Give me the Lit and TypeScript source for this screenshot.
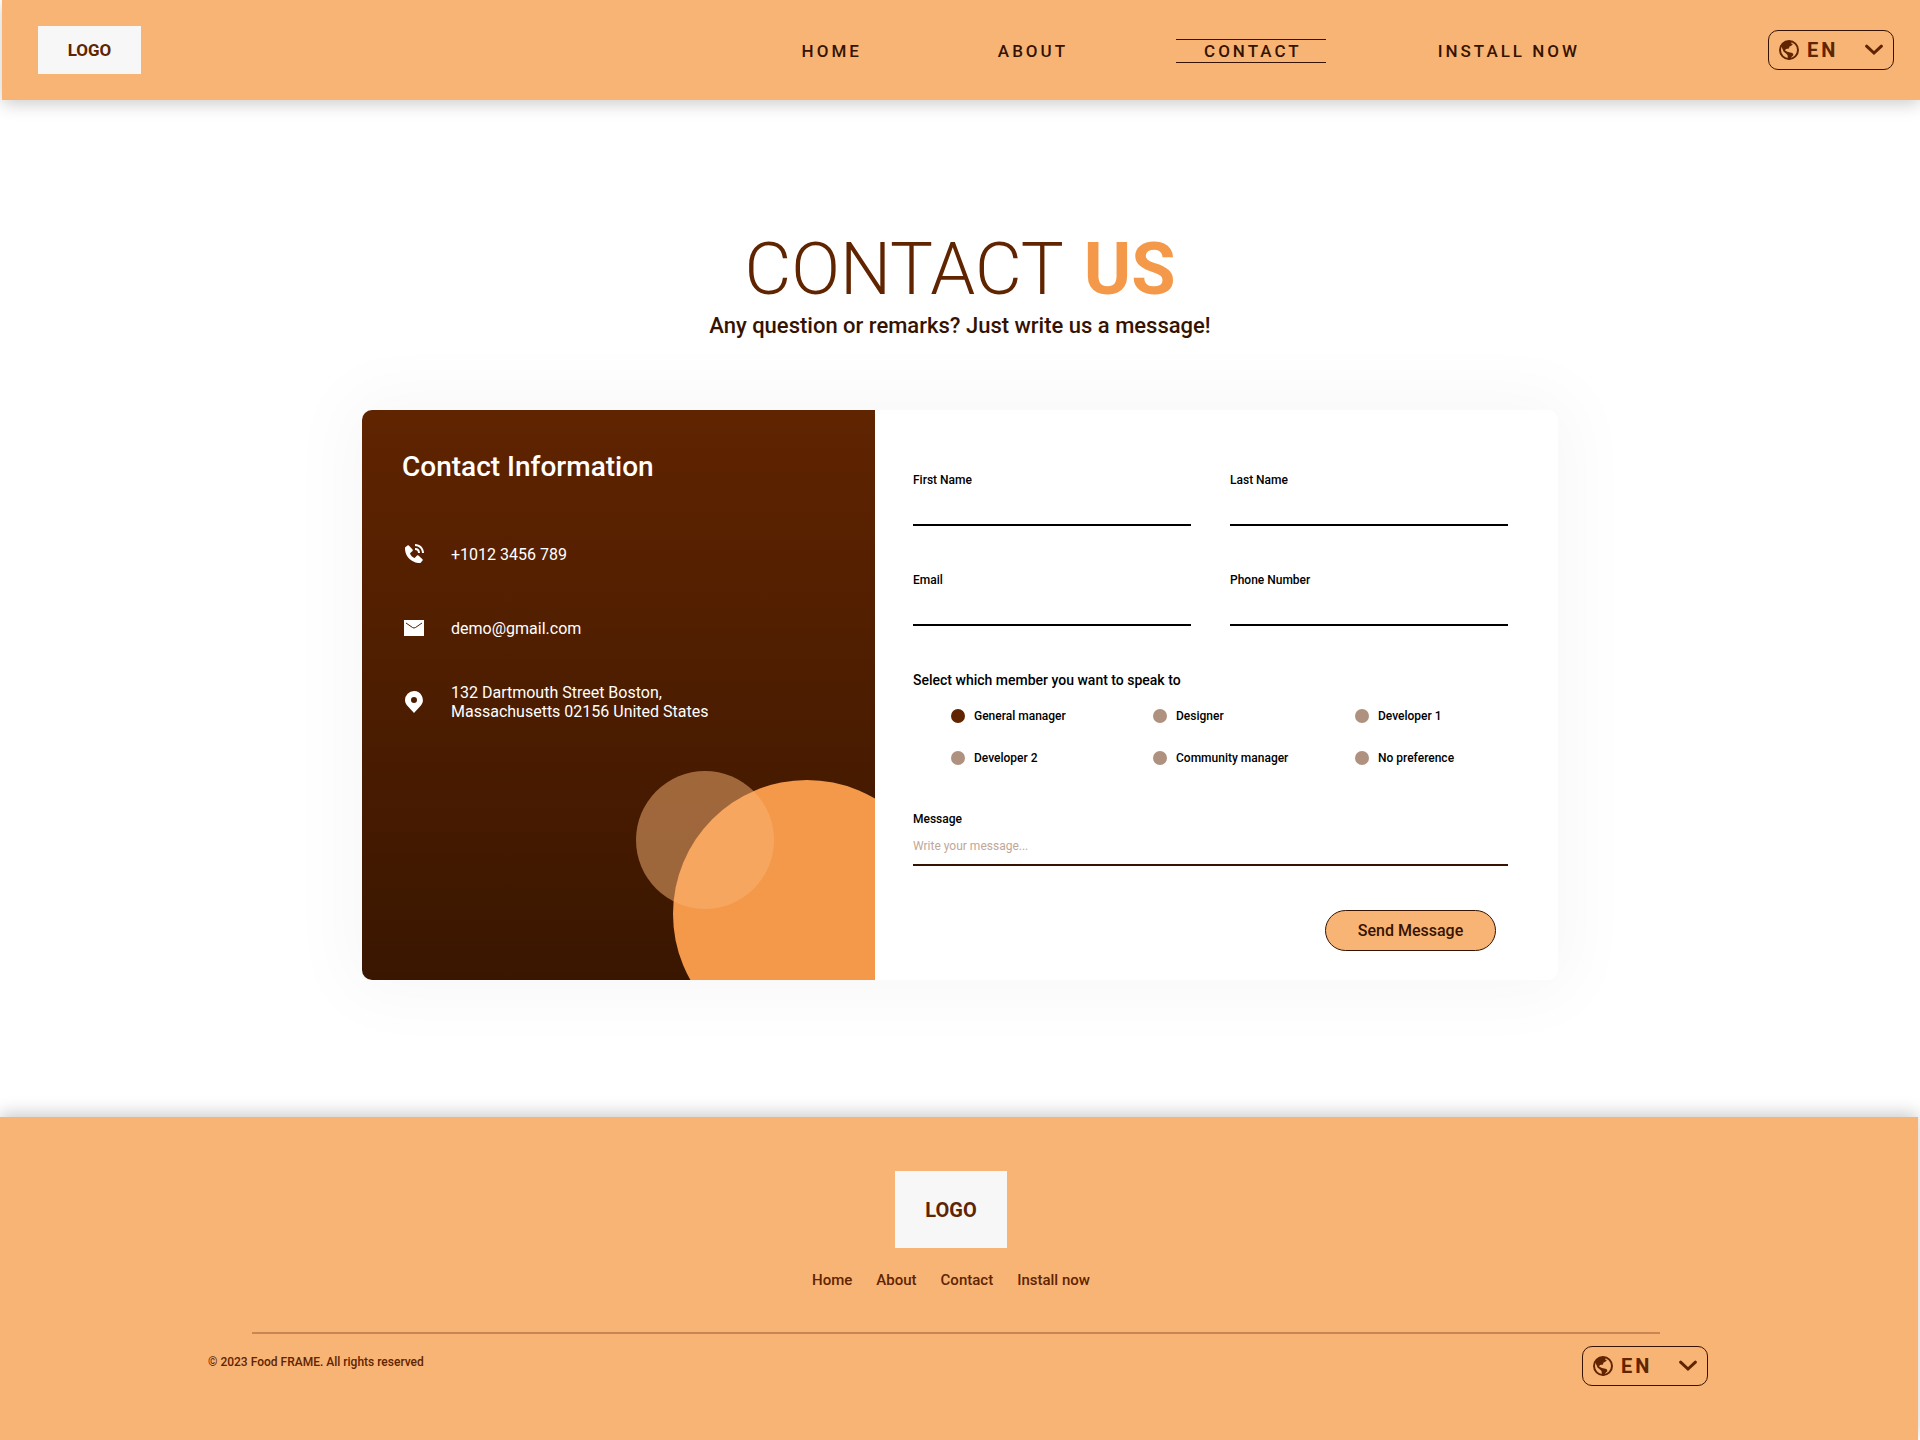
import { LitElement, html, css, svg } from "lit";
import { customElement, property, state } from "lit/decorators.js";

@customElement("language-select")
class LanguageSelect extends LitElement {
  @property() label = "Language";

  static styles = css`
    :host {
      display: block;
      font-family: Roboto, "Liberation Sans", sans-serif;
    }
    .box {
      display: grid;
      grid-template-columns: 20px 1fr 18px;
      align-items: center;
      width: 126px;
      height: 40px;
      padding: 0 10px;
      box-sizing: border-box;
      border: 1px solid #361300;
      border-radius: 10px;
      color: #602400;
    }
    .globe,
    .chevron,
    .select {
      grid-row: 1;
    }
    .globe {
      grid-column: 1;
      width: 20px;
      height: 20px;
    }
    .chevron {
      grid-column: 3;
      width: 18px;
      height: 12px;
    }
    .select {
      grid-column: 1 / 4;
      appearance: none;
      width: 100%;
      height: 38px;
      margin: 0;
      padding: 0 0 0 28px;
      border: 0;
      background: transparent;
      color: inherit;
      font: 700 20px/24px Roboto, "Liberation Sans", sans-serif;
      letter-spacing: 3px;
    }
  `;

  render() {
    return html`
      <div class="box">
        <svg class="globe" viewBox="0 0 20 20" aria-hidden="true">
          <circle cx="10" cy="10" r="9" fill="none" stroke="currentColor" stroke-width="2" />
          <path
            fill="currentColor"
            d="M2 6 5 2.500 9 1 13 1.500 12 3.500 14 4 12 6 10.500 6.500 10 8.500 7 9 6 10.500 9 12 13.500 13 14.500 15 12.500 17 11 20 9 19 8.500 15 7 13.500 4.500 11.500 3.500 9Z"
          />
        </svg>
        <svg class="chevron" viewBox="0 0 18 12" aria-hidden="true">
          <path
            fill="none"
            stroke="currentColor"
            stroke-width="3"
            stroke-linecap="round"
            d="M1.600 2.200 9 9 16.400 2.200"
          />
        </svg>
        <select class="select" aria-label=${this.label}>
          <option>EN</option>
        </select>
      </div>
    `;
  }
}

const phoneIcon = svg`<path fill="currentColor" d="M20 10.999h2C22 5.869 18.127 2 12.990 2v2C17.052 4 20 6.943 20 10.999z M13 8c2.103 0 3 .897 3 3h2c0-3.225-1.775-5-5-5v2z M16.422 13.443a1.001 1.001 0 0 0-1.391.043l-2.393 2.461c-.576-.110-1.734-.471-2.926-1.660-1.192-1.193-1.553-2.354-1.660-2.926l2.459-2.394a1 1 0 0 0 .043-1.391L6.859 3.513a1 1 0 0 0-1.391-.087l-2.170 1.861a1 1 0 0 0-.290.649c-.015.250-.301 6.172 4.291 10.766C11.305 20.707 16.323 21 17.705 21c.202 0 .326-.006.359-.008a.992.992 0 0 0 .648-.291l1.860-2.171a1 1 0 0 0-.086-1.391l-4.064-3.696z"/>`;
const mailIcon = svg`<path fill="currentColor" d="M2 4h20v16H2z"/><path fill="none" stroke="#501d00" d="M4 7 10.500 11.500q1.500 1 3 0L20 7"/>`;
const pinIcon = svg`<path fill="currentColor" fill-rule="evenodd" d="M12 1a9 9 0 0 0-9 9c0 2 .7 3.800 1.900 5.300L12 23l7.100-7.700A9 9 0 0 0 12 1zm0 6a3 3 0 1 1 0 6 3 3 0 0 1 0-6z"/>`;

const links = ["Home", "About", "Contact", "Install now"];
const members = ["General manager", "Designer", "Developer 1", "Developer 2", "Community manager", "No preference"];
const details = [
  { icon: phoneIcon, lines: ["+1012 3456 789"] },
  { icon: mailIcon, lines: ["demo@gmail.com"] },
  { icon: pinIcon, lines: ["132 Dartmouth Street Boston,", "Massachusetts 02156 United States"] },
];
const fields = [
  { id: "first", label: "First Name", type: "text" },
  { id: "last", label: "Last Name", type: "text" },
  { id: "email", label: "Email", type: "email" },
  { id: "phone", label: "Phone Number", type: "tel" },
];

@customElement("app-root")
class AppRoot extends LitElement {
  @state() private member = members[0];

  static styles = css`
    :host {
      display: flex;
      flex-direction: column;
      min-height: 100vh;
      background: #fff;
      color: #361300;
      font-family: Roboto, "Liberation Sans", sans-serif;
    }
    a {
      color: inherit;
      text-decoration: none;
    }
    .header {
      display: flex;
      align-items: center;
      height: 100px;
      margin-left: 2px;
      padding: 0 26px 0 36px;
      box-sizing: border-box;
      background: #f8b475;
      box-shadow: 0 4px 16px rgba(0, 0, 0, 0.2);
    }
    .logo {
      display: grid;
      place-items: center;
      background: #f7f7f7;
      color: #602400;
      font-weight: 700;
    }
    .logo-top {
      width: 103px;
      height: 48px;
      font-size: 17px;
    }
    .nav {
      display: flex;
      gap: 84px;
      margin: 2px 164px 0 auto;
    }
    .nav-link {
      padding: 2px 24px 2px 28px;
      border: solid transparent;
      border-width: 1px 0;
      font-size: 17px;
      font-weight: 500;
      line-height: 18px;
      letter-spacing: 3px;
      text-transform: uppercase;
    }
    .current {
      border-color: #361300;
    }
    .main {
      padding: 134px 24px 137px;
    }
    .title {
      margin: 0;
      color: #602400;
      font-size: 72px;
      font-weight: 300;
      line-height: 72px;
      text-align: center;
    }
    .accent {
      margin-left: 4px;
      color: #f39949;
      font-weight: 700;
    }
    .subtitle {
      margin: 5px 0 69px;
      font-size: 22px;
      font-weight: 500;
      line-height: 30px;
      text-align: center;
    }
    .card {
      display: grid;
      grid-template-columns: minmax(0, 513fr) minmax(0, 683fr);
      min-height: 570px;
      overflow: hidden;
      border-radius: 10px;
      background: #fff;
    }
    .card-shade {
      max-width: 1196px;
      margin: 0 auto;
      border-radius: 10px;
      box-shadow: 0 0 70px 14px rgba(0, 0, 0, 0.035);
    }
    .info {
      position: relative;
      overflow: hidden;
      padding: 40px;
      background: linear-gradient(#602400, #3a1600);
      color: #fff;
    }
    .info-title {
      margin: 0 0 33px;
      font-size: 28px;
      font-weight: 500;
      line-height: 34px;
    }
    .details {
      display: grid;
      grid-auto-rows: 74px;
      margin: 0;
      padding: 0;
      list-style: none;
    }
    .detail {
      display: flex;
      align-items: center;
      gap: 25px;
      font-size: 16px;
      line-height: 19px;
    }
    .detail-icon {
      flex: none;
      width: 24px;
      height: 24px;
    }
    .line {
      display: block;
    }
    .circle {
      position: absolute;
      border-radius: 50%;
    }
    .big {
      top: 370px;
      left: 311px;
      width: 268px;
      height: 268px;
      background: #f39949;
    }
    .small {
      top: 361px;
      left: 274px;
      width: 138px;
      height: 138px;
      background: rgba(250, 180, 117, 0.5);
    }
    .form {
      display: flex;
      flex-direction: column;
      padding: 62px 50px 28px 38px;
      color: #000;
    }
    .fields {
      display: grid;
      grid-template-columns: 1fr 1fr;
      gap: 46px 39px;
    }
    .field {
      display: flex;
      flex-direction: column;
    }
    .label {
      font-size: 12px;
      font-weight: 500;
      line-height: 16px;
    }
    .input {
      width: 100%;
      height: 38px;
      box-sizing: border-box;
      margin: 0;
      padding: 0;
      border: 0;
      border-bottom: 2px solid #000;
      border-radius: 0;
      background: transparent;
      font: 400 12px/16px Roboto, "Liberation Sans", sans-serif;
    }
    .input::placeholder {
      color: #bfa799;
      opacity: 1;
    }
    .message {
      margin-top: 45px;
    }
    .message .input {
      height: 39px;
      border-color: #361300;
    }
    .members {
      min-width: 0;
      margin: 45px 0 0;
      padding: 0;
      border: 0;
    }
    .legend {
      padding: 0;
      font-size: 14px;
      font-weight: 500;
      line-height: 18px;
    }
    .options {
      display: grid;
      grid-template-columns: 202px 202px 1fr;
      row-gap: 26px;
      padding: 19px 0 0 38px;
    }
    .option {
      display: flex;
      align-items: center;
      gap: 9px;
    }
    .radio {
      appearance: none;
      width: 14px;
      height: 14px;
      margin: 0;
      border-radius: 50%;
      background: #af917f;
    }
    .radio:checked {
      background: #602400;
    }
    .send {
      align-self: flex-end;
      width: 171px;
      height: 41px;
      margin: 44px 12px 0 0;
      padding: 0;
      border: 1px solid #361300;
      border-radius: 21px;
      background: #f8b475;
      color: #361300;
      font: 500 16px/20px Roboto, "Liberation Sans", sans-serif;
    }
    .footer {
      flex: 1;
      display: flex;
      flex-direction: column;
      align-items: center;
      margin-right: 2px;
      padding: 54px 208px 0;
      background: #f8b475;
      color: #602400;
      box-shadow: 0 -4px 16px rgba(0, 0, 0, 0.2);
    }
    .brand {
      display: flex;
      flex-direction: column;
      align-items: center;
      gap: 22px;
      padding-right: 16px;
    }
    .logo-bottom {
      width: 112px;
      height: 77px;
      font-size: 20px;
    }
    .footer-nav {
      display: flex;
      gap: 24px;
      font-size: 15px;
      font-weight: 500;
      line-height: 20px;
    }
    .rule {
      align-self: stretch;
      height: 2px;
      margin: 42px 50px 12px 44px;
      border: 0;
      background: #c88655;
    }
    .legal {
      align-self: stretch;
      display: flex;
      justify-content: space-between;
      padding-right: 2px;
    }
    .copyright {
      margin: 8px 0 0;
      font-size: 12px;
      font-weight: 500;
      line-height: 16px;
    }
  `;

  render() {
    return html`
      <header class="header">
        <a class="logo logo-top" href="#">LOGO</a>
        <nav class="nav" aria-label="Main">
          ${links.map(
            (l) => html`<a class="nav-link ${l === "Contact" ? "current" : ""}" href="#">${l}</a>`
          )}
        </nav>
        <language-select></language-select>
      </header>
      <main class="main">
        <h1 class="title">CONTACT <span class="accent">US</span></h1>
        <p class="subtitle">Any question or remarks? Just write us a message!</p>
        <div class="card-shade">
          <div class="card">
            <section class="info">
              <div class="circle big"></div>
              <div class="circle small"></div>
              <h2 class="info-title">Contact Information</h2>
              <ul class="details">
                ${details.map(
                  (d) => html`<li class="detail">
                    <svg class="detail-icon" viewBox="0 0 24 24" aria-hidden="true">${d.icon}</svg>
                    <span>${d.lines.map((t) => html`<span class="line">${t}</span>`)}</span>
                  </li>`
                )}
              </ul>
            </section>
            <form class="form" @submit=${(e: Event) => e.preventDefault()}>
              <div class="fields">
                ${fields.map(
                  (f) => html`<div class="field">
                    <label class="label" for=${f.id}>${f.label}</label>
                    <input class="input" id=${f.id} type=${f.type} />
                  </div>`
                )}
              </div>
              <fieldset class="members">
                <legend class="legend">Select which member you want to speak to</legend>
                <div class="options">
                  ${members.map(
                    (m) => html`<label class="option label">
                      <input
                        class="radio"
                        type="radio"
                        name="member"
                        .checked=${m === this.member}
                        @change=${() => (this.member = m)}
                      />
                      ${m}
                    </label>`
                  )}
                </div>
              </fieldset>
              <div class="field message">
                <label class="label" for="message">Message</label>
                <input class="input" id="message" type="text" placeholder="Write your message..." />
              </div>
              <button class="send" type="submit">Send Message</button>
            </form>
          </div>
        </div>
      </main>
      <footer class="footer">
        <div class="brand">
          <a class="logo logo-bottom" href="#">LOGO</a>
          <nav class="footer-nav" aria-label="Footer">${links.map((l) => html`<a href="#">${l}</a>`)}</nav>
        </div>
        <hr class="rule" />
        <div class="legal">
          <p class="copyright">© 2023 Food FRAME. All rights reserved</p>
          <language-select></language-select>
        </div>
      </footer>
    `;
  }
}
